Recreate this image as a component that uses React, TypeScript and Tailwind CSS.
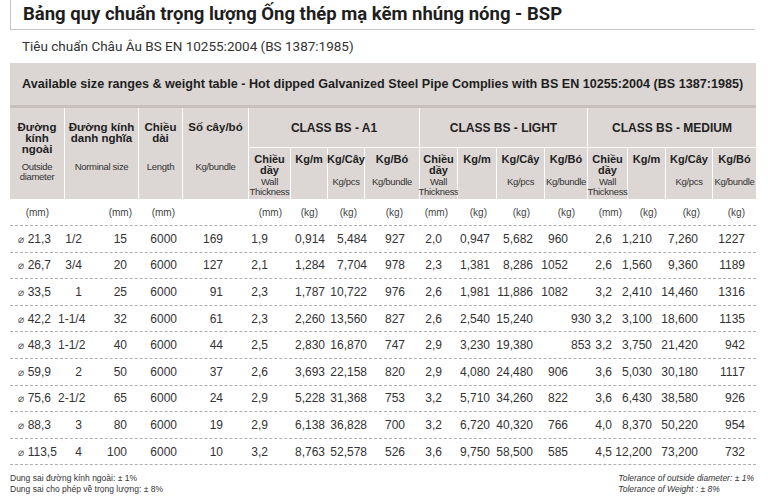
import React from "react";

const ROWS: string[][] = [
  ["21,3", "1/2", "15", "6000", "169", "1,9", "0,914", "5,484", "927", "2,0", "0,947", "5,682", "960", "2,6", "1,210", "7,260", "1227"],
  ["26,7", "3/4", "20", "6000", "127", "2,1", "1,284", "7,704", "978", "2,3", "1,381", "8,286", "1052", "2,6", "1,560", "9,360", "1189"],
  ["33,5", "1", "25", "6000", "91", "2,3", "1,787", "10,722", "976", "2,6", "1,981", "11,886", "1082", "3,2", "2,410", "14,460", "1316"],
  ["42,2", "1-1/4", "32", "6000", "61", "2,3", "2,260", "13,560", "827", "2,6", "2,540", "15,240", "930", "3,2", "3,100", "18,600", "1135"],
  ["48,3", "1-1/2", "40", "6000", "44", "2,5", "2,830", "16,870", "747", "2,9", "3,230", "19,380", "853", "3,2", "3,750", "21,420", "942"],
  ["59,9", "2", "50", "6000", "37", "2,6", "3,693", "22,158", "820", "2,9", "4,080", "24,480", "906", "3,6", "5,030", "30,180", "1117"],
  ["75,6", "2-1/2", "65", "6000", "24", "2,9", "5,228", "31,368", "753", "3,2", "5,710", "34,260", "822", "3,6", "6,430", "38,580", "926"],
  ["88,3", "3", "80", "6000", "19", "2,9", "6,138", "36,828", "700", "3,2", "6,720", "40,320", "766", "4,0", "8,370", "50,220", "954"],
  ["113,5", "4", "100", "6000", "10", "3,2", "8,763", "52,578", "526", "3,6", "9,750", "58,500", "585", "4,5", "12,200", "73,200", "732"],
];

// body cells: width + alignment (first cell is left aligned)
const BODY_COLS = [
  "w-[48px] pl-2 text-left",
  "w-[24px] text-right",
  "w-[45px] text-right",
  "w-[50px] text-right",
  "w-[46px] text-right",
  "w-[45px] text-right",
  "w-[57px] text-right",
  "w-[42px] text-right",
  "w-[38px] text-right",
  "w-[37px] text-right",
  "w-[48px] text-right",
  "w-[43px] text-right",
  "w-[35px] text-right",
  "w-[44px] text-right",
  "w-[40px] text-right",
  "w-[46px] text-right",
  "w-[47px] text-right",
];

// the source table has a couple of light-class bundle values pushed right
const SHIFTED = new Set(["930", "853"]);

const UNITS: [string, string][] = [
  ["w-[39px]", "(mm)"],
  ["w-[83px]", "(mm)"],
  ["w-[43px]", "(mm)"],
  ["w-[107px]", "(mm)"],
  ["w-[36px]", "(kg)"],
  ["w-[39px]", "(kg)"],
  ["w-[46px]", "(kg)"],
  ["w-[45px]", "(mm)"],
  ["w-[39px]", "(kg)"],
  ["w-[43px]", "(kg)"],
  ["w-[45px]", "(kg)"],
  ["w-[47px]", "(mm)"],
  ["w-[35px]", "(kg)"],
  ["w-[43px]", "(kg)"],
  ["w-[45px]", "(kg)"],
];

const cell = "bg-[#dcd6d4] text-[#222]";
const small = "text-[9.5px] leading-[10px] tracking-[-0.3px] text-[#333]";

function LeftHead({ bold, sub }: { bold: string[]; sub: string[] }) {
  return (
    <div className={`${cell} row-span-2 flex flex-col items-center pt-[14px] text-center`}>
      <div className="h-[40px] text-[11.5px] font-bold leading-[11px]">
        {bold.map((b) => (
          <div key={b}>{b}</div>
        ))}
      </div>
      <div className={small}>
        {sub.map((s) => (
          <div key={s}>{s}</div>
        ))}
      </div>
    </div>
  );
}

function SubHeads() {
  return (
    <>
      <div className={`${cell} flex flex-col items-center pt-[6px] text-center`}>
        <div className="text-[11px] font-bold leading-[11px]">Chiều</div>
        <div className="text-[11px] font-bold leading-[11px]">dầy</div>
        <div className={`mt-[1px] ${small}`}>Wall</div>
        <div className={small}>Thickness</div>
      </div>
      <div className={`${cell} pt-[6px] text-center text-[11px] font-bold leading-[11px]`}>Kg/m</div>
      <div className={`${cell} flex flex-col items-center pt-[6px] text-center`}>
        <div className="text-[11px] font-bold leading-[11px]">Kg/Cây</div>
        <div className={`mt-[12px] ${small}`}>Kg/pcs</div>
      </div>
      <div className={`${cell} flex flex-col items-center pt-[6px] text-center`}>
        <div className="text-[11px] font-bold leading-[11px]">Kg/Bó</div>
        <div className={`mt-[12px] ${small}`}>Kg/bundle</div>
      </div>
    </>
  );
}

export default function App() {
  return (
    <div className="w-[768px] h-[500px] overflow-hidden bg-white font-['Liberation_Sans',Arial,sans-serif] text-[#222]">
      <div className="ml-[10px] flex h-[30px] w-[745px] items-center border-b border-l border-[#c8c8c8] pl-3">
        <h1 className="font-['Roboto',sans-serif] text-[18.5px] font-bold leading-none text-[#1e1e1e]">
          Bảng quy chuẩn trọng lượng Ống thép mạ kẽm nhúng nóng - BSP
        </h1>
      </div>
      <div className="ml-[10px] flex h-[33px] items-center pl-3 font-['Roboto',sans-serif] text-[13.5px] text-[#333]">
        Tiêu chuẩn Châu Âu BS EN 10255:2004 (BS 1387:1985)
      </div>

      <div className="ml-[10px] w-[746px]">
        <div className="flex h-[45px] items-center whitespace-nowrap border-b-[3px] border-[#c7bfbc] bg-[#dbd6d4] pl-3 text-[12.6px] font-bold text-[#1e1e1e]">
          Available size ranges &amp; weight table - Hot dipped Galvanized Steel Pipe Complies with BS EN 10255:2004 (BS 1387:1985)
        </div>

        <div className="grid grid-cols-[54px_73px_43px_65px_41px_36px_36px_54px_37px_38px_47px_42px_39px_37px_46px_43px] grid-rows-[39px_51px] gap-px bg-white">
          <LeftHead bold={["Đường", "kính", "ngoài"]} sub={["Outside", "diameter"]} />
          <LeftHead bold={["Đường kính", "danh nghĩa"]} sub={["Norminal size"]} />
          <LeftHead bold={["Chiều", "dài"]} sub={["Length"]} />
          <LeftHead bold={["Số cây/bó"]} sub={["Kg/bundle"]} />
          <div className={`${cell} col-span-4 flex items-center justify-center text-[12px] font-bold`}>CLASS BS - A1</div>
          <div className={`${cell} col-span-4 flex items-center justify-center text-[12px] font-bold`}>CLASS BS - LIGHT</div>
          <div className={`${cell} col-span-4 flex items-center justify-center text-[12px] font-bold`}>CLASS BS - MEDIUM</div>
          <SubHeads />
          <SubHeads />
          <SubHeads />
        </div>

        <div className="flex h-[27px] items-center border-b border-dashed border-[#b0b0b0] text-[10px] text-[#444]">
          {UNITS.map(([w, u], i) => (
            <div key={i} className={`${w} text-right`}>
              {u}
            </div>
          ))}
        </div>

        {ROWS.map((r) => (
          <div key={r[0]} className="flex h-[26.6px] items-center border-b border-dashed border-[#b0b0b0] text-[12px] text-[#333]">
            {r.map((v, i) => (
              <div
                key={i}
                className={`${BODY_COLS[i]} whitespace-nowrap ${i === 12 && SHIFTED.has(v) ? "!text-left indent-[38px]" : ""}`}
              >
                {i === 0 ? (
                  <>
                    <span className="font-['DejaVu_Sans',sans-serif] text-[10.5px] text-[#555]">⌀</span> {v}
                  </>
                ) : (
                  v
                )}
              </div>
            ))}
          </div>
        ))}

        <div className="flex justify-between pt-[8px] text-[8.5px] leading-[11px] text-[#333]">
          <div>
            <div>Dung sai đường kính ngoài: ± 1%</div>
            <div>Dung sai cho phép về trọng lượng: ± 8%</div>
          </div>
          <div className="pr-[2px] italic">
            <div>Tolerance of outside diameter: ± 1%</div>
            <div>Tolerance of Weight : ± 8%</div>
          </div>
        </div>
      </div>
    </div>
  );
}
